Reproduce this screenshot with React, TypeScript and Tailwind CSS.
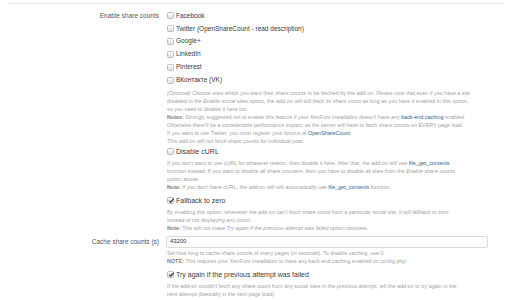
import type { ReactNode } from 'react'

function Box({ checked = false }: { checked?: boolean }) {
  return (
    <span className="relative inline-block w-[7px] h-[7px] shrink-0 rounded-[1.5px] border border-[#bdbdbd] bg-gradient-to-b from-[#fdfdfd] to-[#dedede]">
      {checked && (
        <svg viewBox="0 0 8 8" className="absolute left-[0px] top-[-1px] w-[7px] h-[7px]">
          <path d="M1.5 4.2 L3.2 5.8 L6.5 1.8" fill="none" stroke="#333" strokeWidth="1.4" />
        </svg>
      )}
    </span>
  )
}

function Check({ label, checked = false, big = false }: { label: string; checked?: boolean; big?: boolean }) {
  return (
    <div className="flex items-center gap-[2px] h-[12.9px]">
      <Box checked={checked} />
      <span className={`${big ? 'text-[7px]' : 'text-[6.5px]'} text-[#3a3a3a] leading-none`}>{label}</span>
    </div>
  )
}

function Desc({ children, className = '' }: { children: ReactNode; className?: string }) {
  return <div className={`text-[5.4px] leading-[8px] text-[#a3a3a3] ${className}`}>{children}</div>
}

const A = ({ children }: { children: ReactNode }) => <span className="text-[#2a5f8e]">{children}</span>
const B = ({ children }: { children: ReactNode }) => <b className="font-bold text-[#808080]">{children}</b>

export default function App() {
  return (
    <div className="w-[512px] h-[300px] overflow-hidden bg-white font-['Liberation_Sans',Arial,sans-serif]">
      <div className="mx-[8px] mt-[3px] border-t border-[#ececec]" />

      <div className="grid grid-cols-[159px_1fr] gap-x-[8px] pt-[5.5px]">
        {/* Enable share counts */}
        <div className="h-[12.9px] flex items-center justify-end text-[6.5px] text-[#555]">Enable share counts</div>
        <div>
          <Check label="Facebook" />
          <Check label="Twitter (OpenShareCount - read description)" />
          <Check label="Google+" />
          <Check label="LinkedIn" />
          <Check label="Pinterest" />
          <Check label="ВКонтакте (VK)" />
          <Desc className="mt-[2.5px]">
            <i>(Optional)</i> Choose sites which you want their share counts to be fetched by the add-on. Please note that even if you have a site
            <br />
            disabled in the <i>Enable social sites</i> option, the add-on will still fetch its share count as long as you have it enabled in this option,
            <br />
            so you need to disable it here too.
            <br />
            <B>Notes:</B> Strongly suggested not to enable this feature if your XenForo installation doesn't have any <A>back-end caching</A> enabled.
            <br />
            Otherwise there'll be a considerable performance impact, as the server will have to fetch share counts on EVERY page load.
            <br />
            If you want to use Twitter, you must register your forums at <A>OpenShareCount</A>.
            <br />
            This add-on will not fetch share counts for individual post.
          </Desc>

          <div className="mt-[-0.5px]">
            <Check label="Disable cURL" big />
          </div>
          <Desc className="mt-[1.5px]">
            If you don't want to use cURL for whatever reason, then disable it here. After that, the add-on will use <A>file_get_contents</A>
            <br />
            function instead. If you want to disable all share counters, then you have to disable all sites from the <i>Enable share counts</i>
            <br />
            option above.
            <br />
            <B>Note:</B> If you don't have cURL, the add-on will still automatically use <A>file_get_contents</A> function.
          </Desc>

          <div className="mt-[2.5px]">
            <Check label="Fallback to zero" checked big />
          </div>
          <Desc className="mt-[1px]">
            By enabling this option, whenever the add-on can't fetch share count from a particular social site, it will fallback to zero
            <br />
            instead of not displaying any count.
            <br />
            <B>Note:</B> This will not make <i>Try again if the previous attempt was failed</i> option obsolete.
          </Desc>
        </div>

        {/* Cache share counts */}
        <div className="mt-[4px] h-[12px] flex items-center justify-end text-[6.5px] text-[#555]">Cache share counts (s)</div>
        <div className="mt-[4px]">
          <div className="w-[322px] h-[12px] -ml-[1px] flex items-center px-[3px] rounded-[2px] border border-[#dadada] bg-[#fdfdfd] text-[5.8px] text-[#333]">
            43200
          </div>
          <Desc className="mt-[1.5px] leading-[7.5px]">
            Set how long to cache share counts of every pages (in seconds). To disable caching, use 0.
            <br />
            <B>NOTE:</B> This requires your XenForo installation to have any back-end caching enabled on config.php!
          </Desc>
          <div className="mt-[3px]">
            <Check label="Try again if the previous attempt was failed" checked big />
          </div>
          <Desc className="mt-[1px]">
            If the add-on couldn't fetch any share count from any social sites in the previous attempt, tell the add-on to try again in the
            <br />
            next attempt (basically in the next page load).
          </Desc>
        </div>
      </div>
    </div>
  )
}
